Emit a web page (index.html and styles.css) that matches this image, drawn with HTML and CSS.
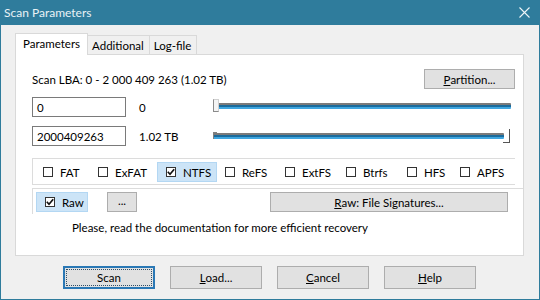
FILE: index.html
```html
<!DOCTYPE html>
<html>
<head>
<meta charset="utf-8">
<link rel="stylesheet" href="styles.css">
</head>
<body>
<div class="window">
  <div class="titlebar">
    <span class="title">Scan Parameters</span>
    <svg class="close" width="11" height="11" viewBox="0 0 11 11"><path d="M0.5 0.5 L10.5 10.5 M10.5 0.5 L0.5 10.5" stroke="#eef5f8" stroke-width="1.1" fill="none"/></svg>
  </div>
  <div class="client">
    <div class="tabs">
      <div class="tab active">Parameters</div>
      <div class="tab">Additional</div>
      <div class="tab">Log-file</div>
    </div>
    <div class="panel">
      <div class="lba-row">
        <span>Scan LBA: 0 - 2 000 409 263 (1.02 TB)</span>
        <div class="btn partition"><u>P</u>artition...</div>
      </div>
      <div class="range-row first">
        <div class="field">0</div>
        <span class="val">0</span>
        <div class="slider s1">
          <div class="track"></div>
          <div class="thumb-start"></div>
        </div>
      </div>
      <div class="range-row second">
        <div class="field">2000409263</div>
        <span class="val">1.02 TB</span>
        <div class="slider s2">
          <div class="track"></div>
          <div class="mark-left"></div>
          <div class="mark-right"></div>
        </div>
      </div>
      <div class="fs-group">
        <label class="cb"><span class="box"></span>FAT</label>
        <label class="cb"><span class="box"></span>ExFAT</label>
        <label class="cb hl"><span class="box"><svg width="10" height="10" viewBox="0 0 10 10"><path d="M1.8 4.8 L4 7.2 L8.2 2.2" stroke="#111" stroke-width="1.7" fill="none"/></svg></span>NTFS</label>
        <label class="cb"><span class="box"></span>ReFS</label>
        <label class="cb"><span class="box"></span>ExtFS</label>
        <label class="cb"><span class="box"></span>Btrfs</label>
        <label class="cb"><span class="box"></span>HFS</label>
        <label class="cb"><span class="box"></span>APFS</label>
      </div>
      <div class="raw-group">
        <label class="cb hl raw"><span class="box"><svg width="10" height="10" viewBox="0 0 10 10"><path d="M1.8 4.8 L4 7.2 L8.2 2.2" stroke="#111" stroke-width="1.7" fill="none"/></svg></span>Raw</label>
        <div class="btn dots">...</div>
        <div class="btn sigs"><u>R</u>aw: File Signatures...</div>
      </div>
      <p class="note">Please, read the documentation for more efficient recovery</p>
    </div>
    <div class="footer">
      <div class="btn big default">Scan</div>
      <div class="btn big"><u>L</u>oad...</div>
      <div class="btn big"><u>C</u>ancel</div>
      <div class="btn big"><u>H</u>elp</div>
    </div>
  </div>
</div>
</body>
</html>
```
FILE: styles.css
```css
* { box-sizing: border-box; }
html, body { margin: 0; padding: 0; }
body {
  width: 540px;
  height: 300px;
  overflow: hidden;
  background: #f0f0f0;
  font-family: Lato, "Noto Sans", "Liberation Sans", sans-serif;
  font-size: 11.5px;
  color: #000;
}
.window {
  width: 540px;
  height: 300px;
  display: flex;
  flex-direction: column;
}
.titlebar {
  height: 25px;
  flex: none;
  background: #2f7c9c;
  color: #e9f2f6;
  font-size: 12px;
  display: flex;
  align-items: center;
  justify-content: space-between;
  padding: 0 10px 1px 4px;
}
.close { display: block; margin-top: 1px; }
.client {
  flex: 1;
  border: 1px solid #2f7c9c;
  border-top: 0;
  background: #f0f0f0;
  padding: 8px 15px 0 14px;
}
.tabs {
  height: 21px;
  display: flex;
  align-items: flex-end;
  position: relative;
  z-index: 1;
}
.tab {
  height: 19px;
  padding: 0 5px 0 4px;
  border: 1px solid #d9d9d9;
  border-bottom: 0;
  margin-left: -1px;
  background: #f0f0f0;
  display: flex;
  align-items: center;
}
.tab.active {
  height: 22px;
  margin-left: 0;
  margin-bottom: -1px;
  padding: 0 7px 2px 7px;
  background: #fff;
}
.panel {
  height: 202px;
  background: #fff;
  border: 1px solid #d9d9d9;
  padding: 0 0 0 16px;
}
.btn {
  background: #e1e1e1;
  border: 1px solid #adadad;
  display: flex;
  align-items: center;
  justify-content: center;
  height: 20px;
}
.lba-row {
  margin-top: 14px;
  height: 20px;
  display: flex;
  align-items: center;
  justify-content: space-between;
  padding-right: 8px;
}
.partition { width: 91px; }
.range-row {
  height: 20px;
  display: flex;
  align-items: center;
}
.range-row.first { margin-top: 8px; }
.range-row.second { margin-top: 9px; }
.field {
  width: 94px;
  height: 20px;
  border: 1px solid #7a7a7a;
  padding-left: 4px;
  display: flex;
  align-items: center;
}
.val { width: 74px; margin-left: 13px; }
.slider {
  position: relative;
  width: 298px;
  height: 20px;
  display: flex;
  align-items: center;
}
.track {
  height: 6px;
  background: linear-gradient(#7b7b7b 0 1.5px, #1b6b9c 1.5px 4px, #3fa6e0 4px 6px);
  border-radius: 0 1px 1px 0;
}
.s1 .track { margin-left: 4px; width: 294px; margin-top: -2px; }
.s2 .track { margin-left: 1px; width: 290px; margin-top: 0; }
.thumb-start {
  position: absolute;
  left: 0;
  top: 2px;
  width: 6px;
  height: 13px;
  background: #f4f4f4;
  border-left: 1.5px solid #8a8a8a;
  border-bottom: 1.5px solid #8a8a8a;
  border-top: 1px solid #d0d0d0;
  border-right: 1px solid #d0d0d0;
}
.mark-left {
  position: absolute;
  left: 0;
  top: 6px;
  width: 4px;
  height: 7px;
  border-left: 1.5px solid #808080;
  border-top: 1.5px solid #808080;
}
.mark-right {
  position: absolute;
  left: 290px;
  top: 3px;
  width: 7px;
  height: 14px;
  border-right: 1.5px solid #555;
  border-bottom: 1.5px solid #555;
}
.fs-group {
  margin-top: 12px;
  width: 483px;
  height: 27px;
  border-top: 1px solid #dcdcdc;
  border-left: 1px solid #dcdcdc;
  border-bottom: 1px solid #dcdcdc;
  padding: 3px 0 0 1px;
  display: grid;
  grid-template-columns: 55px 68px 59px 60px 61px 61px 53px auto;
  align-items: start;
}
.cb {
  height: 20px;
  display: flex;
  align-items: center;
  padding: 0 6px 0 8px;
  justify-self: start;
  border: 1px solid transparent;
}
.cb .box {
  width: 10px;
  height: 10px;
  border: 1px solid #333;
  background: #fff;
  margin-right: 7px;
  display: flex;
  align-items: center;
  justify-content: center;
  flex: none;
}
.cb .box svg { display: block; margin: -1px; }
.cb.hl {
  background: #cce4f7;
  border-color: #b3d7f3;
  padding-right: 6px;
}
.fs-group .cb.hl { width: 60px; }
.raw-group {
  margin-top: 3px;
  height: 26px;
  border-top: 1px solid #dcdcdc;
  border-left: 1px solid #dcdcdc;
  padding: 3px 0 0 3px;
  display: flex;
  align-items: flex-start;
}
.cb.raw { width: 52px; }
.dots { width: 30px; margin-left: 19px; padding-bottom: 3px; }
.sigs { width: 238px; margin-left: 133px; }
.note {
  margin: 6px 0 0 40px;
  line-height: 15px;
}
.footer {
  margin-top: 10px;
  padding-left: 48px;
  display: flex;
  gap: 15px;
}
.btn.big {
  width: 92px;
  height: 23px;
}
.btn.default {
  border: 1px solid #2a78b5;
  box-shadow: inset 0 0 0 1px #2a78b5;
  outline: 1px dotted #2d4e69;
  outline-offset: -4px;
}
```
